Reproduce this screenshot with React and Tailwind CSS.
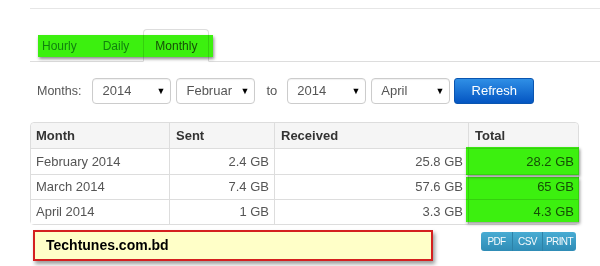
import { useState } from "react";

const rows = [
  { month: "February 2014", sent: "2.4 GB", received: "25.8 GB", total: "28.2 GB", h: "h-[26px]" },
  { month: "March 2014", sent: "7.4 GB", received: "57.6 GB", total: "65 GB", h: "h-[25px]" },
  { month: "April 2014", sent: "1 GB", received: "3.3 GB", total: "4.3 GB", h: "h-[25px]" },
];

function FakeSelect({ value, className = "" }) {
  return (
    <div
      className={`h-[26px] w-[79px] flex items-center justify-between border border-[#ccc] rounded-[4px] bg-white pl-[9px] pr-[5px] text-[13px] text-[#555] shadow-[inset_0_1px_1px_rgba(0,0,0,0.06)] ${className}`}
    >
      <span className="whitespace-nowrap overflow-hidden">{value}</span>
      <span className="text-[9px] text-black leading-none">▼</span>
    </div>
  );
}

export default function App() {
  const [tab, setTab] = useState("Monthly");
  const tabs = ["Hourly", "Daily", "Monthly"];

  return (
    <div className="w-[600px] h-[266px] overflow-hidden bg-white pt-[8px] font-['Liberation_Sans',Arial,sans-serif]">
      {/* top rule */}
      <div className="ml-[30px] h-px bg-[#e6e6e6]" />

      {/* tabs */}
      <div className="relative mt-[20px]">
        <ul className="ml-[30px] flex border-b border-[#ddd]">
          {tabs.map((t) => {
            const active = t === tab;
            return (
              <li key={t} className="-mb-px mr-[2px]">
                <button
                  onClick={() => setTab(t)}
                  className={`h-[33px] px-[11px] text-[12px] rounded-t-[4px] border ${
                    active
                      ? "border-[#ddd] border-b-transparent bg-white text-[#555]"
                      : "border-transparent text-[#428bca]"
                  }`}
                >
                  {t}
                </button>
              </li>
            );
          })}
        </ul>
        {/* highlight marker */}
        <div className="absolute left-[38px] top-[6px] w-[175px] h-[22px] bg-[#3cf00f] mix-blend-multiply shadow-[1px_2px_3px_rgba(0,0,0,0.45)]" />
      </div>

      {/* months filter */}
      <div className="mt-[16px] pl-[37px] flex items-center">
        <span className="text-[12.5px] text-[#555]">Months:</span>
        <FakeSelect value="2014" className="ml-[11px]" />
        <FakeSelect value="Februar" className="ml-[5px]" />
        <span className="ml-[11px] text-[13px] text-[#555]">to</span>
        <FakeSelect value="2014" className="ml-[10px]" />
        <FakeSelect value="April" className="ml-[5px]" />
        <button className="ml-[4px] h-[26px] w-[80px] rounded-[3px] border border-[#0a55b0] bg-[linear-gradient(#2f8fe6,#0455c2)] text-[13px] text-white">
          Refresh
        </button>
      </div>

      {/* table */}
      <div className="mt-[18px] ml-[30px] w-[549px] border border-[#ddd] rounded-[4px] text-[13px] text-[#555]">
        <div className="grid grid-cols-[138px_105px_194px_1fr] h-[25px] bg-[#f5f5f5] font-bold text-[#333] rounded-t-[4px]">
          <div className="pl-[5px] flex items-center">Month</div>
          <div className="pl-[6px] flex items-center border-l border-[#ddd]">Sent</div>
          <div className="pl-[6px] flex items-center border-l border-[#ddd]">Received</div>
          <div className="pl-[6px] flex items-center border-l border-[#ddd]">Total</div>
        </div>
        {rows.map((r, i) => (
          <div
            key={r.month}
            className={`grid grid-cols-[138px_105px_194px_1fr] ${r.h} border-t border-[#ddd] bg-white`}
          >
            <div className="pl-[5px] flex items-center">{r.month}</div>
            <div className="pr-[5px] flex items-center justify-end border-l border-[#ddd]">{r.sent}</div>
            <div className="pr-[5px] flex items-center justify-end border-l border-[#ddd]">{r.received}</div>
            <div className="relative pr-[4px] flex items-center justify-end border-l border-[#ddd]">
              {r.total}
              {i === 0 && (
                <div className="absolute -left-[3px] -right-[1px] -top-[2px] -bottom-[1px] z-10 bg-[#3cf00f] mix-blend-multiply shadow-[1px_2px_3px_rgba(0,0,0,0.45)]" />
              )}
              {i === 1 && (
                <div className="absolute -left-[3px] -right-px top-[2px] h-[45px] z-10 bg-[#3cf00f] mix-blend-multiply shadow-[1px_2px_3px_rgba(0,0,0,0.4)]" />
              )}
            </div>
          </div>
        ))}
      </div>

      {/* footer */}
      <div className="mt-[5px] flex items-start justify-between pl-[33px] pr-[24px]">
        <div className="w-[400px] h-[31px] flex items-center pl-[11px] border-2 border-[#d42020] bg-[#ffffc8] shadow-[2px_3px_4px_rgba(0,0,0,0.4)] text-[14px] font-bold text-black">
          Techtunes.com.bd
        </div>
        <div className="mt-[2px] flex h-[19px] rounded-[3px] overflow-hidden bg-[linear-gradient(#48acd3,#2f8cb6)] text-[10px] tracking-[-0.6px] text-white/95">
          <span className="w-[32px] flex items-center justify-center border-r border-[#2d82a8]">PDF</span>
          <span className="w-[30px] flex items-center justify-center border-r border-[#2d82a8]">CSV</span>
          <span className="w-[33px] flex items-center justify-center">PRINT</span>
        </div>
      </div>
    </div>
  );
}
